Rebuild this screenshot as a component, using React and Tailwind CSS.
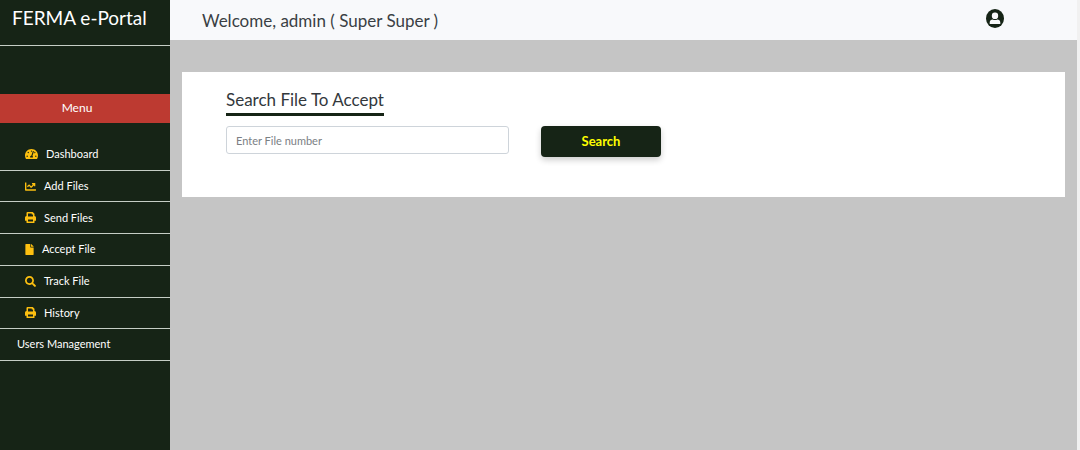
import { FaTachometerAlt, FaChartLine, FaFile, FaSearch } from "react-icons/fa";

function PrintIcon({ className }) {
  return (
    <svg viewBox="0 0 22 22" className={className} fill="currentColor" aria-hidden="true">
      <path
        fillRule="evenodd"
        d="M5 0h10.500L19 3.500V8a3 3 0 0 1 3 3v5.500a1 1 0 0 1-1 1h-2V21a1 1 0 0 1-1 1H4a1 1 0 0 1-1-1v-3.500H1a1 1 0 0 1-1-1V11a3 3 0 0 1 3-3V2a2 2 0 0 1 2-2zM6 3v6h10V5h-2.500V3zM6 15v4h10v-4z"
      />
    </svg>
  );
}

const items = [
  { label: "Dashboard", Icon: FaTachometerAlt, size: "h-3 w-[13px]" },
  { label: "Add Files", Icon: FaChartLine, size: "h-[11px] w-[11px]" },
  { label: "Send Files", Icon: PrintIcon, size: "h-[11px] w-[11px]" },
  { label: "Accept File", Icon: FaFile, size: "h-[11px] w-[9px]" },
  { label: "Track File", Icon: FaSearch, size: "h-[11px] w-[11px]" },
  { label: "History", Icon: PrintIcon, size: "h-[11px] w-[11px]" },
  { label: "Users Management" },
];

function Sidebar() {
  return (
    <aside className="w-[170px] shrink-0 bg-[#162416] text-white">
      <div className="h-[46px] border-b border-[#c5cec5] pl-3 pt-1">
        <h1 className="text-[19px] leading-7 whitespace-nowrap">FERMA e-Portal</h1>
      </div>
      <h2 className="mt-12 h-[29px] bg-[#bd3a31] pr-4 text-center text-xs leading-7">Menu</h2>
      <nav className="pt-4">
        <ul className="grid h-[222px] auto-rows-fr">
          {items.map(({ label, Icon, size }) => (
            <li key={label} className="border-b border-[#c5cec5]">
              <a
                href="#"
                className={
                  "flex h-full items-center gap-2 text-[11px] whitespace-nowrap " +
                  (Icon ? "pl-[25px]" : "pl-[17px]")
                }
              >
                {Icon && <Icon className={size + " shrink-0 text-[#fdc010]"} aria-hidden="true" />}
                {label}
              </a>
            </li>
          ))}
        </ul>
      </nav>
    </aside>
  );
}

function UserIcon() {
  return (
    <svg viewBox="0 0 18 19" className="h-[19px] w-[18px]" aria-hidden="true">
      <ellipse cx="9" cy="9.5" rx="9" ry="9.5" fill="#162416" />
      <rect x="5.900" y="3.500" width="6.200" height="6.600" rx="2.800" fill="#f8f9fa" />
      <path d="M3.700 15v-1.400c0-2 1.300-3.100 3-3.100.7.4 1.400.5 2.300.5s1.600-.1 2.300-.5c1.700 0 3 1.100 3 3.100V15z" fill="#f8f9fa" />
    </svg>
  );
}

export default function App() {
  return (
    <div className="flex min-h-screen bg-[#f1f1f1] pr-[3px] font-['Lato','Noto_Sans',sans-serif]">
      <Sidebar />
      <div className="min-w-0 flex-1 bg-[#c5c5c5]">
        <header className="flex h-10 items-start justify-between bg-[#f8f9fb] pt-[9px] pr-[73px] pl-8 text-[#3a3f44]">
          <p className="text-[17px] leading-6">Welcome, admin ( Super Super )</p>
          <button type="button" aria-label="Account">
            <UserIcon />
          </button>
        </header>
        <main className="px-3 pt-8">
          <section className="h-[125px] bg-white px-11 pt-4">
            <h2 className="w-fit border-b-[3px] border-[#162416] pb-px text-[17px] leading-6 text-[#33383c]">
              Search File To Accept
            </h2>
            <form className="mt-[10px] flex items-start gap-8" onSubmit={(e) => e.preventDefault()}>
              <input
                type="text"
                aria-label="File number"
                placeholder="Enter File number"
                className="h-7 w-[283px] rounded-[3px] border border-[#ced4da] bg-white px-[9px] text-[11px] placeholder:text-[#7b8084]"
              />
              <button
                type="submit"
                className="h-[31px] w-[120px] rounded-[4px] bg-[#162416] text-[13px] font-bold text-[#ffff00] shadow-[0_3px_6px_rgba(0,0,0,0.2)]"
              >
                Search
              </button>
            </form>
          </section>
        </main>
      </div>
    </div>
  );
}
